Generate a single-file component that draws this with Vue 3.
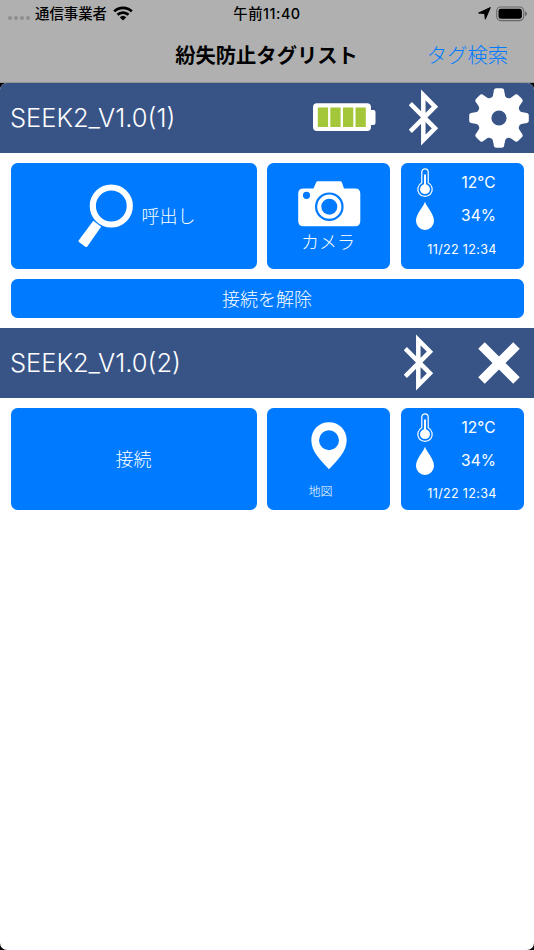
<script setup>
import { ref } from 'vue'

const teeth = [0, 45, 90, 135, 180, 225, 270, 315]

const tags = ref([
  { id: 1, name: 'SEEK2_V1.0(1)', connected: true, temp: '12°C', humidity: '34%', date: '11/22 12:34' },
  { id: 2, name: 'SEEK2_V1.0(2)', connected: false, temp: '12°C', humidity: '34%', date: '11/22 12:34' }
])

const toggle = (tag) => tag.connected = !tag.connected
</script>

<template>
  <div class="screen">
    <header class="top">
      <div class="status">
        <div class="carrier">
          <span class="dots"><i v-for="n in 4" :key="n"></i></span>
          <span class="carrier-name">通信事業者</span>
          <svg class="wifi" width="20" height="15" viewBox="0 0 20 15">
            <g fill="none" stroke="#000" stroke-width="2.7">
              <path d="M1.2 5.4a12.6 12.6 0 0 1 17.6 0" />
              <path d="M4.5 8.8a7.9 7.9 0 0 1 11 0" />
            </g>
            <path d="M10 14.5 6.7 11.3a4.8 4.8 0 0 1 6.6 0z" />
          </svg>
        </div>
        <div class="time">午前11:40</div>
        <div class="indicators">
          <svg width="13" height="13" viewBox="0 0 13 13">
            <path d="M12.3.6 7.300 12.200 6.700 6.500.6 6z" stroke="#000" stroke-width="1" stroke-linejoin="round" />
          </svg>
          <svg width="32" height="16" viewBox="0 0 32 16">
            <rect x=".7" y="1" width="27" height="13.6" rx="4" fill="none" stroke="#686868" stroke-width="1.1" />
            <rect x="2.5" y="2.8" width="23.4" height="10" rx="2.3" />
            <path d="M29 5.5q2 .6 2 2.3t-2 2.3z" fill="#686868" />
          </svg>
        </div>
      </div>
      <div class="nav">
        <h1>紛失防止タグリスト</h1>
        <a class="find">タグ検索</a>
      </div>
    </header>

    <main class="list">
      <section v-for="tag in tags" :key="tag.id">
        <div class="tag-head" :class="{ off: !tag.connected }">
          <h2>{{ tag.name }}</h2>
          <svg v-if="tag.connected" class="battery" width="63" height="29" viewBox="0 0 63 29">
            <path d="M4 .3h50a4 4 0 0 1 4 4v2.8h2.5a2 2 0 0 1 2 2v11a2 2 0 0 1-2 2H58V24a4 4 0 0 1-4 4H4a4 4 0 0 1-4-4V4.3a4 4 0 0 1 4-4z" fill="#fff" />
            <path d="M4.8 4.500h10.300v19.600H4.800zM17.300 4.500h10.300v19.600H17.300zM30 4.500h10.300v19.600H30zM42.500 4.500h10.300v19.600H42.500z" fill="#a4c639" />
          </svg>
          <svg class="bluetooth" width="30" height="58" viewBox="0 0 30 58">
            <path d="M1.3 14.7 26 39.3 14.3 51V6L26 17.7 1.3 42.3" fill="none" stroke="#fff" stroke-width="4.5" />
          </svg>
          <svg v-if="tag.connected" class="gear" width="60" height="60" viewBox="-30 -30 60 60">
            <path v-for="t in teeth" :key="t" :transform="`rotate(${t})`" d="M-8-19Q-5.500-22-5.300-26.500Q-5.200-29.800-2.500-29.800H2.500Q5.200-29.800 5.300-26.500Q5.500-22 8-19z" fill="#fff" />
            <circle r="14.7" fill="none" stroke="#fff" stroke-width="14.2" />
          </svg>
          <svg v-else class="cross" width="42" height="42" viewBox="0 0 42 42">
            <path d="M3.5 3.5 38.5 38.5M38.5 3.5 3.5 38.5" stroke="#fff" stroke-width="9.2" />
          </svg>
        </div>

        <div class="cards" :class="{ off: !tag.connected }">
          <button v-if="tag.connected" class="card call">
            <svg width="56" height="64" viewBox="0 0 56 64">
              <circle cx="33.3" cy="22" r="18.5" fill="none" stroke="#fff" stroke-width="6.2" />
              <path d="M15.3 36.7 23.1 42.800 9.3 62.400Q8.300 63.400 7.300 62.700L1 58Q.1 57.300.8 56.300z" fill="#fff" />
            </svg>
            <span>呼出し</span>
          </button>
          <button v-else class="card connect" @click="toggle(tag)">接続</button>

          <button v-if="tag.connected" class="card camera">
            <svg width="63" height="46" viewBox="0 0 63 46">
              <path d="M5.5 7.500H15.500L18 1.700Q18.500.3 20 .3H42Q43.500.3 44 1.700L46 7.500H57Q62.300 7.500 62.300 12.800V40Q62.300 45.300 57 45.300H5.500Q.2 45.300.2 40V12.800Q.2 7.500 5.500 7.500z" fill="#fff" />
              <circle cx="8.5" cy="14.3" r="3.6" fill="#007bff" />
              <circle cx="31.3" cy="25.7" r="13.2" fill="none" stroke="#007bff" stroke-width="2.2" />
              <circle cx="31.3" cy="25.7" r="8" fill="#007bff" />
            </svg>
            <span>カメラ</span>
          </button>
          <button v-else class="card map">
            <svg width="36" height="48" viewBox="0 0 36 48">
              <path fill-rule="evenodd" d="M18 .3C8 .3.3 8 .3 18 .3 30 10 38.500 18 47.300 26 38.500 35.700 30 35.700 18 35.700 8 28 .3 18 .3zM18 8.200a10 10 0 1 1 0 20 10 10 0 0 1 0-20z" fill="#fff" />
            </svg>
            <span>地図</span>
          </button>

          <div class="card sensor">
            <div class="reading">
              <svg width="18" height="30" viewBox="0 0 18 30">
                <path d="M5.8 14.800V4a3.200 3.200 0 0 1 6.400 0v10.800a7.200 7.200 0 1 1-6.400 0z" fill="none" stroke="#fff" stroke-width="1.2" />
                <circle cx="9" cy="21.2" r="4.900" fill="#fff" />
                <path d="M9 6.500V20" stroke="#fff" stroke-width="2" />
              </svg>
              <span>{{ tag.temp }}</span>
            </div>
            <div class="reading">
              <svg width="18" height="30" viewBox="0 0 18 30">
                <path d="M9 .8C11 6.500 18 13 18 20a9 9 0 0 1-18 0C0 13 7 6.500 9 .8z" fill="#fff" />
              </svg>
              <span>{{ tag.humidity }}</span>
            </div>
            <div class="date">{{ tag.date }}</div>
          </div>
        </div>

        <div v-if="tag.connected" class="release">
          <button class="card" @click="toggle(tag)">接続を解除</button>
        </div>
      </section>
    </main>
  </div>
</template>

<style>
body {
  margin: 0;
  background: #000;
}
</style>

<style scoped>
.screen {
  display: flex;
  flex-direction: column;
  width: 534px;
  height: 950px;
  overflow: hidden;
  font-family: Inter, "Noto Sans CJK JP", sans-serif;
}

svg {
  display: block;
  flex: none;
}

.top {
  box-sizing: border-box;
  height: 83px;
  background: #b0b0b0;
  border-bottom: 1px solid #969696;
}

.status {
  display: grid;
  grid-template-columns: 1fr auto 1fr;
  align-items: center;
  height: 26px;
  font-size: 14.4px;
  line-height: 26px;
  font-weight: 500;
}

.carrier-name,
.time {
  padding-top: 1px;
}

.time {
  letter-spacing: 0.5px;
}

.carrier {
  display: flex;
  align-items: center;
  padding-left: 8px;
}

.dots {
  display: flex;
  gap: 2px;
  margin: 9px 5px 0 0;
}

.dots i {
  width: 4px;
  height: 4px;
  border-radius: 50%;
  background: #8e8e8e;
}

.wifi {
  margin-left: 6px;
}

.indicators {
  display: flex;
  align-items: center;
  justify-content: flex-end;
  gap: 5px;
  padding-right: 6px;
}

.nav {
  display: grid;
  grid-template-columns: 1fr auto 1fr;
  align-items: center;
  height: 56px;
  padding-top: 2px;
  line-height: 56px;
}

h1 {
  grid-column: 2;
  margin: 0 1px 0 0;
  font-size: 20.3px;
  font-weight: 600;
}

.find {
  justify-self: end;
  padding-right: 26px;
  font-size: 20.3px;
  font-weight: 300;
  color: #007bff;
}

.list {
  flex: 1;
  overflow: hidden;
  background: #fff;
  border-radius: 7px;
}

.tag-head {
  display: flex;
  align-items: center;
  box-sizing: border-box;
  height: 69.5px;
  padding: 0 5px 0 10px;
  background: #385487;
}

.tag-head.off {
  padding-right: 14px;
}

h2 {
  flex: 1;
  margin: 0;
  font-size: 25.5px;
  font-weight: 300;
  color: #fff;
}

.battery {
  margin-right: 33px;
}

.bluetooth {
  margin-right: 30px;
}

.off .bluetooth {
  margin-right: 44.5px;
}

.cards {
  display: grid;
  grid-template-columns: 2fr 1fr 1fr;
  gap: 10.5px;
  height: 105.5px;
  padding: 10.5px 10.5px 0;
}

.cards.off {
  height: 102px;
}

.card {
  display: flex;
  align-items: center;
  justify-content: center;
  box-sizing: border-box;
  min-width: 0;
  margin: 0;
  padding: 0;
  border: none;
  border-radius: 6.5px;
  background: #007bff;
  color: #fff;
  font-family: inherit;
  font-size: 18px;
  font-weight: 300;
}

.call {
  gap: 8px;
  padding-left: 6px;
}

.call span {
  padding-bottom: 2px;
}

.connect {
  padding-bottom: 2px;
}

.camera {
  flex-direction: column;
  justify-content: flex-start;
  padding: 17.5px 0 0 1px;
}

.camera span {
  margin-top: 3px;
  padding-right: 2px;
  line-height: 26px;
}

.map {
  flex-direction: column;
  justify-content: flex-start;
  padding-top: 14px;
}

.map span {
  margin: 12px 16px 0 0;
  font-size: 12px;
  line-height: 20px;
}

.sensor {
  flex-direction: column;
  align-items: stretch;
  justify-content: flex-start;
  padding-top: 3px;
}

.reading {
  display: grid;
  grid-template-columns: 18px 1fr;
  align-items: center;
  height: 33.5px;
  padding: 0 14px 0 15px;
  font-size: 15.5px;
  font-weight: 400;
}

.reading span {
  padding: 0 0 1px 14px;
  text-align: center;
}

.date {
  margin-top: 8px;
  font-size: 12.6px;
  font-weight: 400;
  letter-spacing: 0.3px;
  line-height: 18px;
  text-align: center;
}

.off .date {
  margin-top: 6.5px;
}

.release {
  padding: 10.5px 10.5px 10px;
}

.release .card {
  width: 100%;
  height: 39px;
  padding-bottom: 2px;
}
</style>
